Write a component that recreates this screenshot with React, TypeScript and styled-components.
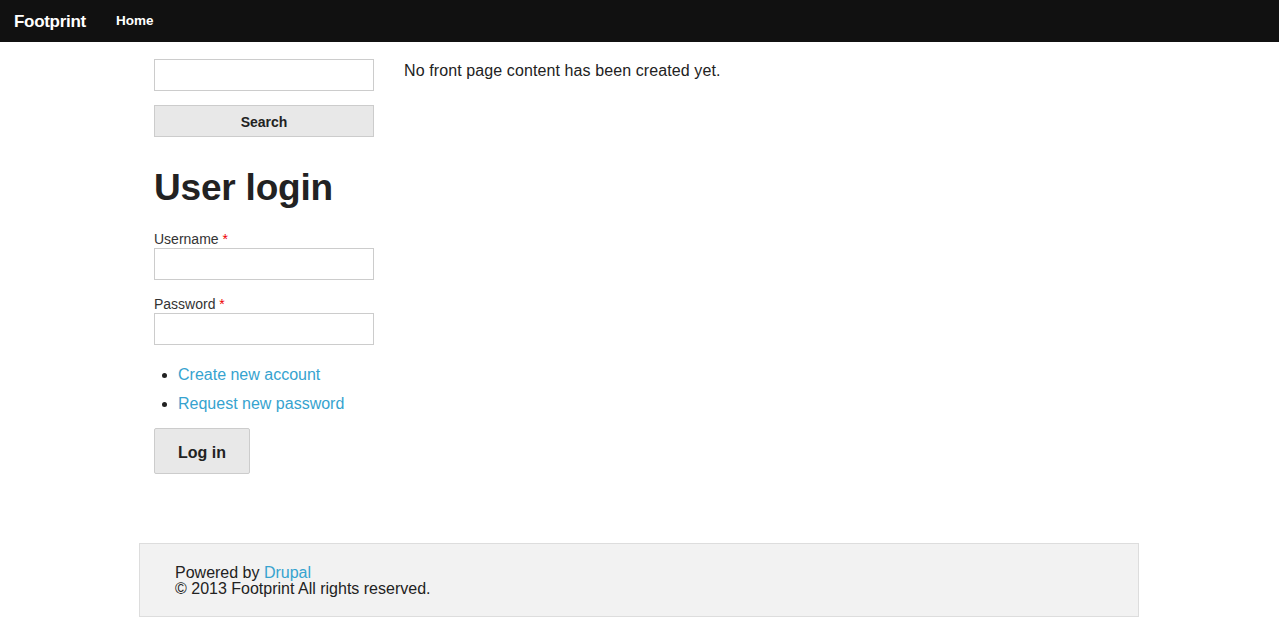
import React from 'react';
import styled, { createGlobalStyle } from 'styled-components';

const GlobalStyle = createGlobalStyle`
  html, body {
    margin: 0;
    padding: 0;
    background: #fff;
  }
  body {
    font-family: "Liberation Sans", Arial, Helvetica, sans-serif;
    color: #222;
    font-size: 16px;
  }
`;

const TopBar = styled.header`
  height: 42px;
  background: #111;
  display: flex;
  align-items: center;
  padding: 0 14px;
  gap: 30px;
`;

const Brand = styled.a`
  color: #fff;
  font-weight: bold;
  font-size: 17px;
  letter-spacing: -0.3px;
  text-decoration: none;
  margin-top: 1px;
`;

const NavLink = styled.a`
  color: #fff;
  font-weight: bold;
  font-size: 13.5px;
  text-decoration: none;
  margin-top: -2px;
`;

// centred 1000px column, rounded down to the left like the original
const Container = styled.div`
  width: 1000px;
  margin-left: max(0px, calc((100% - 1001px) / 2));
  display: flex;
  padding-top: 17px;
`;

const Sidebar = styled.aside`
  width: 220px;
  padding: 0 15px;
  flex-shrink: 0;
`;

const Main = styled.main`
  flex: 1;
  padding: 1px 15px 0;
  font-size: 16px;
  line-height: 22px;
  letter-spacing: 0.1px;
`;

const TextInput = styled.input`
  display: block;
  box-sizing: border-box;
  width: 220px;
  height: 32px;
  border: 1px solid #ccc;
  background: #fff;
  margin: 0;
  padding: 4px 6px;
  font: inherit;
`;

const Button = styled.button<{ $wide?: boolean; $big?: boolean }>`
  display: block;
  box-sizing: border-box;
  width: ${(p) => (p.$wide ? '220px' : '96px')};
  height: ${(p) => (p.$big ? '46px' : '32px')};
  padding: ${(p) => (p.$big ? '3px' : '2px')} 10px 0;
  border: 1px solid #ccc;
  border-radius: ${(p) => (p.$big ? '2px' : '0')};
  background: #e8e8e8;
  color: #222;
  font-family: "Liberation Sans", Arial, sans-serif;
  font-weight: bold;
  font-size: ${(p) => (p.$big ? '16px' : '14px')};
  margin: 0;
  cursor: pointer;
`;

const SearchForm = styled.form`
  display: flex;
  flex-direction: column;
  gap: 14px;
  margin: 0;
`;

const Heading = styled.h2`
  font-size: 37px;
  font-weight: bold;
  line-height: 42px;
  margin: 30px 0 22px;
  letter-spacing: -0.2px;
`;

const LoginForm = styled.form`
  display: flex;
  flex-direction: column;
  align-items: flex-start;
  margin: 0;
`;

const FormItem = styled.div`
  margin-bottom: 16px;
`;

const Label = styled.label`
  display: block;
  font-size: 14px;
  line-height: 17px;
  color: #333;
`;

const Required = styled.span`
  color: #e00;
`;

const LinkList = styled.ul`
  margin: -1px 0 10px;
  padding-left: 24px;
  font-size: 16px;
  line-height: 29px;
`;

const Link = styled.a`
  color: #36a3cf;
  text-decoration: none;
`;

const Footer = styled.footer`
  box-sizing: border-box;
  width: 1000px;
  margin: 69px 0 0 max(0px, calc((100% - 1001px) / 2));
  background: #f2f2f2;
  border: 1px solid #ddd;
  padding: 21px 35px 19px;
  font-size: 16px;
  line-height: 16px;
  min-height: 74px;
`;

export default function App() {
  return (
    <>
      <GlobalStyle />
      <TopBar>
        <Brand href="#">Footprint</Brand>
        <NavLink href="#">Home</NavLink>
      </TopBar>
      <Container>
        <Sidebar>
          <SearchForm onSubmit={(e) => e.preventDefault()}>
            <TextInput type="text" />
            <Button $wide type="submit">Search</Button>
          </SearchForm>
          <Heading>User login</Heading>
          <LoginForm onSubmit={(e) => e.preventDefault()}>
            <FormItem>
              <Label>
                Username <Required>*</Required>
              </Label>
              <TextInput type="text" />
            </FormItem>
            <FormItem>
              <Label>
                Password <Required>*</Required>
              </Label>
              <TextInput type="password" />
            </FormItem>
            <LinkList>
              <li>
                <Link href="#">Create new account</Link>
              </li>
              <li>
                <Link href="#">Request new password</Link>
              </li>
            </LinkList>
            <Button $big type="submit">Log in</Button>
          </LoginForm>
        </Sidebar>
        <Main>No front page content has been created yet.</Main>
      </Container>
      <Footer>
        Powered by <Link href="#">Drupal</Link>
        <br />© 2013 Footprint All rights reserved.
      </Footer>
    </>
  );
}
